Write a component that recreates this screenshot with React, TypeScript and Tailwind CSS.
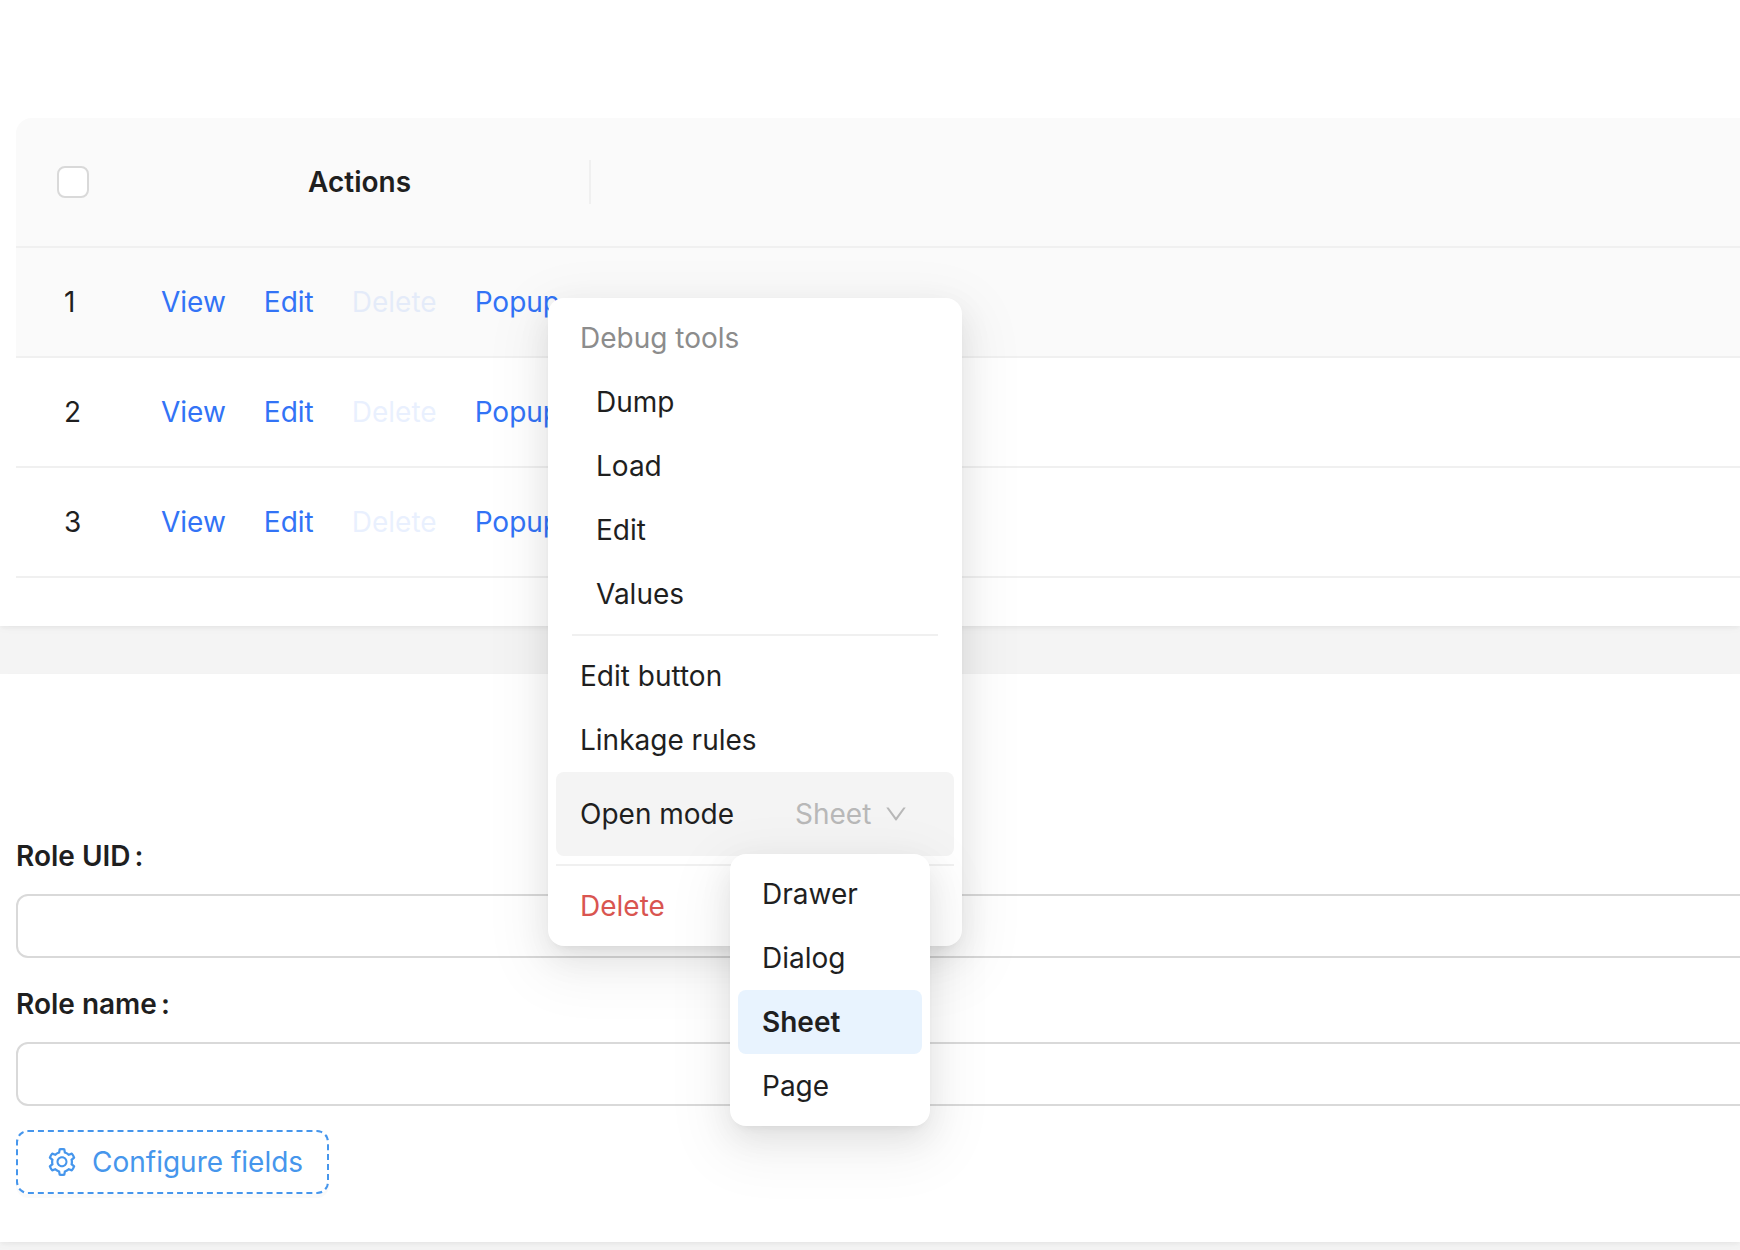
import React from "react";
import { AiOutlineDown, AiOutlineSetting } from "react-icons/ai";

const PANEL =
  "bg-white shadow-[0_2px_4px_0_rgba(0,0,0,0.03),0_2px_12px_-2px_rgba(0,0,0,0.02),0_4px_8px_0_rgba(0,0,0,0.02)]";
const POPUP =
  "absolute rounded-2xl bg-white p-2 shadow-[0_12px_32px_0_rgba(0,0,0,0.08),0_6px_12px_-8px_rgba(0,0,0,0.12),0_18px_56px_16px_rgba(0,0,0,0.05)]";
const ITEM = "block h-16 w-full rounded-lg px-6 text-left";

const rows = [1, 2, 3];
const debugTools = ["Dump", "Load", "Edit", "Values"];
const modes = ["Drawer", "Dialog", "Sheet", "Page"];

function RecordsTable() {
  return (
    <table className="w-full table-fixed border-separate border-spacing-0">
      <colgroup>
        <col className="w-[114px]" />
        <col className="w-[461px]" />
        <col />
      </colgroup>
      <thead>
        <tr className="h-[130px] bg-[#fafafa]">
          <th className="rounded-tl-2xl border-b-2 border-[#f0f0f0] bg-[#fafafa] p-0">
            <input
              type="checkbox"
              aria-label="Select all"
              className="mx-auto block size-8 appearance-none rounded-lg border-2 border-[#d9d9d9] bg-white"
            />
          </th>
          <th className="border-b-2 border-[#f0f0f0] p-0 font-semibold">
            <div className="border-r-2 border-[#f0f0f0]">Actions</div>
          </th>
          <th className="border-b-2 border-[#f0f0f0] p-0" aria-label="More" />
        </tr>
      </thead>
      <tbody>
        {rows.map((n) => (
          <tr key={n} className={n === 1 ? "h-[110px] bg-[#fafafa]" : "h-[110px]"}>
            <td className="border-b-2 border-[#f0f0f0] p-0 pl-12">{n}</td>
            <td className="border-b-2 border-[#f0f0f0] p-0 pl-[31px]">
              <div className="flex gap-[38px] whitespace-nowrap text-[#3273f6]">
                <a href="#view">View</a>
                <a href="#edit">Edit</a>
                <a href="#delete" className="opacity-10">
                  Delete
                </a>
                <a href="#popup">Popup</a>
              </div>
            </td>
            <td className="border-b-2 border-[#f0f0f0] p-0" />
          </tr>
        ))}
      </tbody>
    </table>
  );
}

function Field({ id, label }: { id: string; label: string }) {
  return (
    <div className="mb-6">
      <label htmlFor={id} className="flex h-11 items-center gap-1 font-semibold">
        {label}
        <span>:</span>
      </label>
      <input
        id={id}
        type="text"
        className="mt-4 block h-16 w-full rounded-xl border-2 border-[#d9d9d9] bg-white px-6"
      />
    </div>
  );
}

function ModeList() {
  return (
    <div role="listbox" aria-label="Open mode options" className={`${POPUP} top-[82px] left-[174px] w-[200px]`}>
      {modes.map((m) => (
        <button
          key={m}
          type="button"
          role="option"
          aria-selected={m === "Sheet"}
          className={m === "Sheet" ? `${ITEM} bg-[#e8f3fe] font-semibold` : ITEM}
        >
          {m}
        </button>
      ))}
    </div>
  );
}

function SettingsMenu() {
  return (
    <div className={`${POPUP} top-[298px] left-[548px] w-[414px]`}>
      <div className="flex h-16 items-center px-6 text-[#8c8c8c]">Debug tools</div>
      {debugTools.map((t) => (
        <button key={t} type="button" className="block h-16 w-full px-10 text-left">
          {t}
        </button>
      ))}
      <hr className="mx-4 my-2 border-t-2 border-[#f0f0f0]" />
      <button type="button" className={ITEM}>
        Edit button
      </button>
      <button type="button" className={ITEM}>
        Linkage rules
      </button>
      <div className="relative">
        <div className="flex h-[84px] items-center justify-between rounded-lg bg-[#f4f4f4] pr-[45px] pl-6">
          <label htmlFor="open-mode">Open mode</label>
          <div className="flex items-center gap-2 text-[#b8b8b8]">
            <select id="open-mode" defaultValue="Sheet" className="w-20 appearance-none">
              {modes.map((m) => (
                <option key={m}>{m}</option>
              ))}
            </select>
            <AiOutlineDown size={26} />
          </div>
        </div>
        <ModeList />
      </div>
      <hr className="my-2 border-t-2 border-[#f0f0f0]" />
      <button type="button" className={`${ITEM} text-[#d95550]`}>
        Delete
      </button>
    </div>
  );
}

export default function App() {
  return (
    <div className="relative flex min-h-screen flex-col gap-12 overflow-hidden bg-[#f4f4f4] font-['Inter',sans-serif] text-[28px] leading-[44px] text-[#1f1f1f]">
      <section className={`${PANEL} pt-[118px] pb-12 pl-4`}>
        <RecordsTable />
      </section>
      <section className={`${PANEL} pt-40 pb-12 pl-4`}>
        <form className="-mr-4">
          <Field id="role-uid" label="Role UID" />
          <Field id="role-name" label="Role name" />
          <button
            type="button"
            className="flex h-16 items-center gap-[14px] rounded-xl border-2 border-dashed border-[#4696ec] pr-6 pl-7 text-[#4696ec] shadow-[0_4px_0_rgba(0,0,0,0.02)]"
          >
            <AiOutlineSetting size={32} />
            Configure fields
          </button>
        </form>
      </section>
      <SettingsMenu />
    </div>
  );
}
